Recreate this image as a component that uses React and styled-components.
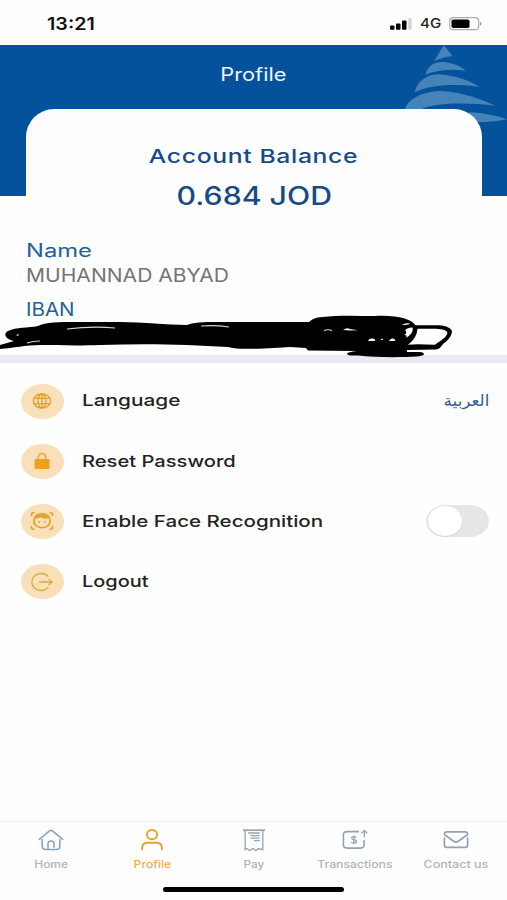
import React, { useState } from 'react'
import styled, { createGlobalStyle } from 'styled-components'

const BLUE = '#04529c'
const ORANGE = '#e8a42c'

const GlobalStyle = createGlobalStyle`
    body{
        margin: 0;
        background: #fefefe;
        font-family: Inter, "Liberation Sans", sans-serif;
    }
`

function Globe() {
    return (
        <svg width="20" height="16" viewBox="0 0 20 16" fill="none" stroke="#e2a02c" strokeWidth="1.4">
            <ellipse cx="10" cy="8" rx="8.6" ry="7" />
            <ellipse cx="10" cy="8" rx="4" ry="7" />
            <path d="M10 1v14M2.4 5.400h15.200M2.400 10.600h15.200" />
        </svg>
    )
}

function Lock() {
    return (
        <svg width="16" height="18" viewBox="0 0 16 18">
            <path d="M4.3 8V5.2a3.7 3.7 0 0 1 7.4 0V8" fill="none" stroke="#eda52a" strokeWidth="1.5" />
            <rect x="0.5" y="7" width="15" height="10" rx="1.2" fill="#eda21c" />
        </svg>
    )
}

function Face() {
    return (
        <svg width="24" height="20" viewBox="0 0 24 20" fill="none" stroke="#dfa02e" strokeWidth="1.6">
            <path d="M1.5 5V3.5Q1.5 1.5 4.5 1.5M19.5 1.5Q22.5 1.5 22.5 3.5V5M1.5 15v1.5q0 2 3 2M19.5 18.5q3 0 3-2V15" />
            <path d="M4 8.5C3.200 13.5 7 16.700 12 16.700S20.800 13.500 20 8.500" strokeWidth="1.500" />
            <path d="M3.400 9.800C3 4.700 7 2 12 2s9 2.700 8.600 7.800c-.8-.6-1.400-1.500-2-2.500C14.500 8.200 12 7.300 10.300 6 8.500 7.400 6.700 7.800 5.300 7.700 4.700 8.500 4.300 9.200 3.400 9.800z" fill="#e5a42f" stroke="none" />
            <circle cx="9" cy="11" r="0.9" fill="#dfa02e" stroke="none" />
            <circle cx="15" cy="11" r="0.9" fill="#dfa02e" stroke="none" />
        </svg>
    )
}

function Exit() {
    return (
        <svg width="24" height="20" viewBox="0 0 24 20" fill="none" stroke="#deaa3c" strokeWidth="1.3" strokeLinecap="round" strokeLinejoin="round">
            <path d="M18 4.400C16.400 2.600 14 1.500 11.300 1.500 6 1.500 1.800 5.200 1.800 10S6 18.500 11.300 18.500c2.700 0 5.100-1.100 6.700-2.900" />
            <path d="M9.500 10h12.700M19 7.400l3.300 2.600L19 12.600" />
        </svg>
    )
}

function HomeIcon() {
    return (
        <svg width="26" height="22" viewBox="0 0 26 22" fill="none" stroke="#8fa3b8" strokeWidth="1.6" strokeLinecap="round" strokeLinejoin="round">
            <path d="M1.300 10.300L11.500 1.900q1.500-1 3 0L24.700 10.300" />
            <path d="M4.200 10.500v7q0 3 3.300 3h11q3.300 0 3.300-3v-7" />
            <path d="M10 20.300v-5.600q0-2.700 3-2.700t3 2.700v3.500" />
        </svg>
    )
}

function PersonIcon() {
    return (
        <svg width="26" height="22" viewBox="0 0 26 22" fill="none" stroke="#e3a136" strokeWidth="1.900" strokeLinecap="round">
            <ellipse cx="13" cy="5.600" rx="5.200" ry="4.600" />
            <path d="M3.200 20.600v-1.800q0-5 5.600-5h8.400q5.600 0 5.600 5v1.800" />
        </svg>
    )
}

function ReceiptIcon() {
    return (
        <svg width="24" height="22" viewBox="0 0 24 22" fill="none" stroke="#93a3b1" strokeWidth="1.300">
            <path d="M1 1.200h22" strokeWidth="1.700" />
            <path d="M3.200 1.200v19.300q1.500-1.600 3 0t3 0 3 0 3 0 3 0q1.300-1.400 2.600 0V1.200" />
            <path d="M6.200 4h11.600M8.500 6.700h9.300M8.500 9.200h9.300M12 11.700h5.800" />
        </svg>
    )
}

function TransferIcon() {
    return (
        <svg width="26" height="22" viewBox="0 0 26 22" fill="none" stroke="#8fa1b2" strokeWidth="1.600">
            <path d="M17 2.600H5q-3.600 0-3.600 3v10.500q0 3 3.600 3h13.500q3.600 0 3.600-3V11" />
            <path d="M22.400 8.500V2M19.400 4.200l3-2.600 3 2.600" strokeWidth="1.200" />
            <path d="M14.200 8.600q-.6-1.100-2.300-1.100-2.200 0-2.200 1.600 0 1.300 2.200 1.600 2.500.3 2.500 1.800 0 1.600-2.500 1.600-2 0-2.600-1.200M11.900 6.500v8.500" strokeWidth="1.200" />
        </svg>
    )
}

function MailIcon() {
    return (
        <svg width="26" height="22" viewBox="0 0 26 22" fill="none" stroke="#8fa1b2" strokeWidth="1.700" strokeLinejoin="round">
            <path d="M1.400 8.500v7.500q0 2.400 2.800 2.400h17.600q2.800 0 2.800-2.400V8.500" />
            <path d="M1.600 5.800C.8 3.800 2 2.800 4.200 2.800h17.600c2.200 0 3.400 1 2.600 3L15.300 12.300q-2.300 1.600-4.600 0z" />
        </svg>
    )
}

function Tree() {
    return (
        <TreeView viewBox="0 0 381 255">
            <path d="M192 0L217 33Q190 36 163 47z" />
            <path d="M135 89C146 63 160 51 185 51 218 52 242 64 257 77 215 71 172 75 135 89z" />
            <path d="M104 142C112 105 145 88 175 88 232 93 270 107 297 126 225 115 150 120 104 142z" />
            <path d="M75 192C88 155 140 138 185 138 250 142 312 165 345 182 262 173 172 172 125 192L90 205z" />
            <path d="M265 202C310 203 355 213 381 223 355 228 330 232 290 231z" />
        </TreeView>
    )
}

function Scribble() {
    return (
        <ScribbleView viewBox="0 0 507 50">
            <path d="M0 32V28L14 24C5 22 3 17 8 14 16 10 28 11 38 9 45 5 60 5 75 5H120C145 5 165 8 187 8 195 4 215 5 245 5H309C312 2 316 .5 322 0 340-2 358-1 375-1 398-2 411 2 415.500 8.300H436C444 8.300 450 10 452 14 452 20 446 25 443 27Q440 32 436 32.500L407 33V35H420Q424 35.500 424 37.300C423 39 420 39 417 39.500 400 40.500 375 40.500 358 38.500L350 38.500Q347 38 347 36.500 348 35 357 34L308 33.500 306 31 290 30C275 31 248 33 233 31L228 30 187 28C160 27 130 27 100 28 75 29 55 28 40 28 25 28 14 31 0 32z" />
            <path d="M417.500 11.700H436Q447 12 447.500 16C446 21 440 24 435 27.700L418 27.300 408 27.800Q417 21 417.500 11.700z" fill="#fefefe" />
            <path d="M405 13Q408 10 412.500 10.500 414 16 406 21 408 18 404 18 408 16 405 13zM402 8q3-2.500 8-1.500-2 1.500-8 1.500zM16 18l3-1-1 2z" fill="#fefefe" />
            <path d="M368 24q1-3 4-2.500 4 0 3 2.500zM380 22.500l3-1v1.500zM389 24q1-3 4-2.500 3 1 2 2.500zM343 13q4-3 7-1l8 1.300-8 .2z" fill="#f2f2f2" />
            <path d="M67 12q25-3 48-1M201 9q15-1 28 1M324 13.500q4-1.500 8 0M27 26q6-2 13-2" fill="none" stroke="#d4d4d4" strokeWidth="1.200" />
        </ScribbleView>
    )
}

const tabs = [
    { name: 'Home', icon: HomeIcon, stretch: 1.19 },
    { name: 'Profile', icon: PersonIcon, stretch: 1.22, active: true },
    { name: 'Pay', icon: ReceiptIcon, stretch: 1.18 },
    { name: 'Transactions', icon: TransferIcon, stretch: 1.22 },
    { name: 'Contact us', icon: MailIcon, stretch: 1.25 },
]

export default function App() {
    const [faceId, setFaceId] = useState(false)
    return (
        <Screen>
            <GlobalStyle />
            <StatusBar>
                <Text $size={17} $weight={600} $stretch={1.16} $color="#111">13:21</Text>
                <StatusIcons>
                    <svg width="23" height="12" viewBox="0 0 23 12">
                        <rect x="0" y="7.500" width="4.500" height="4.200" rx="1" />
                        <rect x="6" y="5.500" width="4.500" height="6.200" rx="1" />
                        <rect x="12" y="2.500" width="4.500" height="9.200" rx="1" />
                        <rect x="18.300" y="0" width="3.500" height="11.700" rx="1" fill="#d5d5d5" />
                    </svg>
                    <Network><Text $size={13.5} $weight={500} $stretch={1.12} $color="#222">4G</Text></Network>
                    <svg width="33" height="14" viewBox="0 0 33 14">
                        <rect x="0.700" y="0.700" width="29" height="12" rx="3.500" fill="#fff" stroke="#aaa" strokeWidth="1.200" />
                        <rect x="2.500" y="2.400" width="18" height="8.600" rx="1.800" />
                        <path d="M31 4.700q3 2 0 4z" fill="#999" />
                    </svg>
                </StatusIcons>
            </StatusBar>
            <Header>
                <Tree />
                <Title><Text $size={18} $stretch={1.21} $center $color="#eef5ff">Profile</Text></Title>
                <BalanceCard>
                    <Text $size={19} $weight={500} $stretch={1.3} $spacing={0.5} $center $color="#174a88">Account Balance</Text>
                    <Text $size={25} $weight={500} $stretch={1.21} $center $color="#174a88">0.684 JOD</Text>
                </BalanceCard>
            </Header>
            <Details>
                <Text $size={18} $stretch={1.32} $color="#20619f">Name</Text>
                <Text $size={18} $stretch={1.17} $color="#747474">MUHANNAD ABYAD</Text>
                <Text $size={18} $stretch={1.14} $color="#20619f">IBAN</Text>
                <Scribble />
            </Details>
            <Menu>
                <MenuRow>
                    <Badge><Globe /></Badge>
                    <Text $size={16.5} $weight={500} $stretch={1.26}>Language</Text>
                    <Arabic lang="ar" dir="rtl">العربية</Arabic>
                </MenuRow>
                <MenuRow>
                    <Badge><Lock /></Badge>
                    <Text $size={16.5} $weight={500} $stretch={1.22}>Reset Password</Text>
                </MenuRow>
                <MenuRow>
                    <Badge><Face /></Badge>
                    <Text $size={16.5} $weight={500} $stretch={1.245}>Enable Face Recognition</Text>
                    <Toggle role="switch" aria-checked={faceId} $on={faceId} onClick={() => setFaceId(!faceId)}>
                        <Knob />
                    </Toggle>
                </MenuRow>
                <MenuRow>
                    <Badge><Exit /></Badge>
                    <Text $size={16.5} $weight={500} $stretch={1.21}>Logout</Text>
                </MenuRow>
            </Menu>
            <TabBar>
                {tabs.map(({ name, icon: Icon, stretch, active }) => (
                    <Tab key={name}>
                        <Icon />
                        <Text $size={10} $weight={500} $stretch={stretch} $center $color={active ? '#e6b052' : '#aeb2b7'}>{name}</Text>
                    </Tab>
                ))}
            </TabBar>
            <HomeIndicator />
        </Screen>
    )
}

const Screen = styled.div`
    width: 507px;
    height: 900px;
    display: flex;
    flex-direction: column;
    background: #fefefe;
    overflow: hidden;
`
const Text = styled.span`
    display: block;
    width: max-content;
    white-space: nowrap;
    font-size: ${p => p.$size}px;
    font-weight: ${p => p.$weight || 400};
    letter-spacing: ${p => p.$spacing || 0}px;
    line-height: 1.3;
    color: ${p => p.$color || '#232323'};
    transform: scaleX(${p => p.$stretch});
    transform-origin: ${p => (p.$center ? 'center' : 'left')};
`
const StatusBar = styled.div`
    box-sizing: border-box;
    height: 45px;
    padding: 3px 25px 0 47px;
    display: flex;
    align-items: center;
    justify-content: space-between;
`
const StatusIcons = styled.div`
    display: flex;
    align-items: center;
    gap: 7px;
`
const Network = styled.div`
    margin-right: 3px;
`
const Header = styled.div`
    position: relative;
    height: 151px;
    background: ${BLUE};
`
const TreeView = styled.svg`
    position: absolute;
    top: 0;
    right: 0;
    width: 127px;
    height: 85px;
    fill: #4583b8;
`
const Title = styled.div`
    height: 64px;
    box-sizing: border-box;
    padding-top: 17.5px;
    display: flex;
    justify-content: center;
`
const BalanceCard = styled.div`
    position: relative;
    box-sizing: border-box;
    height: 87px;
    margin: 0 25px 0 26px;
    padding-top: 36px;
    display: flex;
    flex-direction: column;
    align-items: center;
    gap: 10px;
    background: #fefefe;
    border-radius: 28px 28px 0 0;
`
const Details = styled.div`
    position: relative;
    box-sizing: border-box;
    height: 167px;
    padding: 43px 26px 0;
    border-bottom: 8px solid #e9e9f2;
    ${Text}:nth-child(2){
        margin-top: 2px;
    }
    ${Text}:nth-child(3){
        margin-top: 10px;
    }
`
const ScribbleView = styled.svg`
    position: absolute;
    left: 0;
    top: 121px;
    width: 507px;
    height: 50px;
    overflow: visible;
`
const Menu = styled.div`
    flex: 1;
    padding: 8px 18px 0 20.5px;
`
const MenuRow = styled.div`
    height: 60.2px;
    display: flex;
    align-items: center;
`
const Badge = styled.div`
    box-sizing: border-box;
    width: 43px;
    height: 35px;
    margin-right: 18px;
    padding-right: 1px;
    display: flex;
    align-items: center;
    justify-content: center;
    border-radius: 50%;
    background: #fae0b8;
`
const Arabic = styled.span`
    margin-left: auto;
    font-family: "DejaVu Sans", sans-serif;
    font-size: 15.5px;
    color: #345a90;
    transform: scaleX(1.08);
    transform-origin: right;
`
const Toggle = styled.button`
    box-sizing: border-box;
    width: 63px;
    height: 32px;
    margin-left: auto;
    padding: 1px 2px;
    display: flex;
    justify-content: ${p => (p.$on ? 'flex-end' : 'flex-start')};
    border: 0;
    border-radius: 19px / 16px;
    background: ${p => (p.$on ? ORANGE : '#e6e6e8')};
`
const Knob = styled.span`
    width: 34px;
    height: 30px;
    border-radius: 50%;
    background: #fff;
    box-shadow: 0 1px 2px rgba(0, 0, 0, 0.08);
`
const TabBar = styled.div`
    height: 65px;
    border-top: 1px solid #f0f1f3;
    display: flex;
`
const Tab = styled.div`
    flex: 1;
    padding-top: 7px;
    display: flex;
    flex-direction: column;
    align-items: center;
    gap: 7px;
`
const HomeIndicator = styled.div`
    width: 181px;
    height: 5px;
    margin: 0 auto 8px;
    border-radius: 3px;
    background: #000;
`
